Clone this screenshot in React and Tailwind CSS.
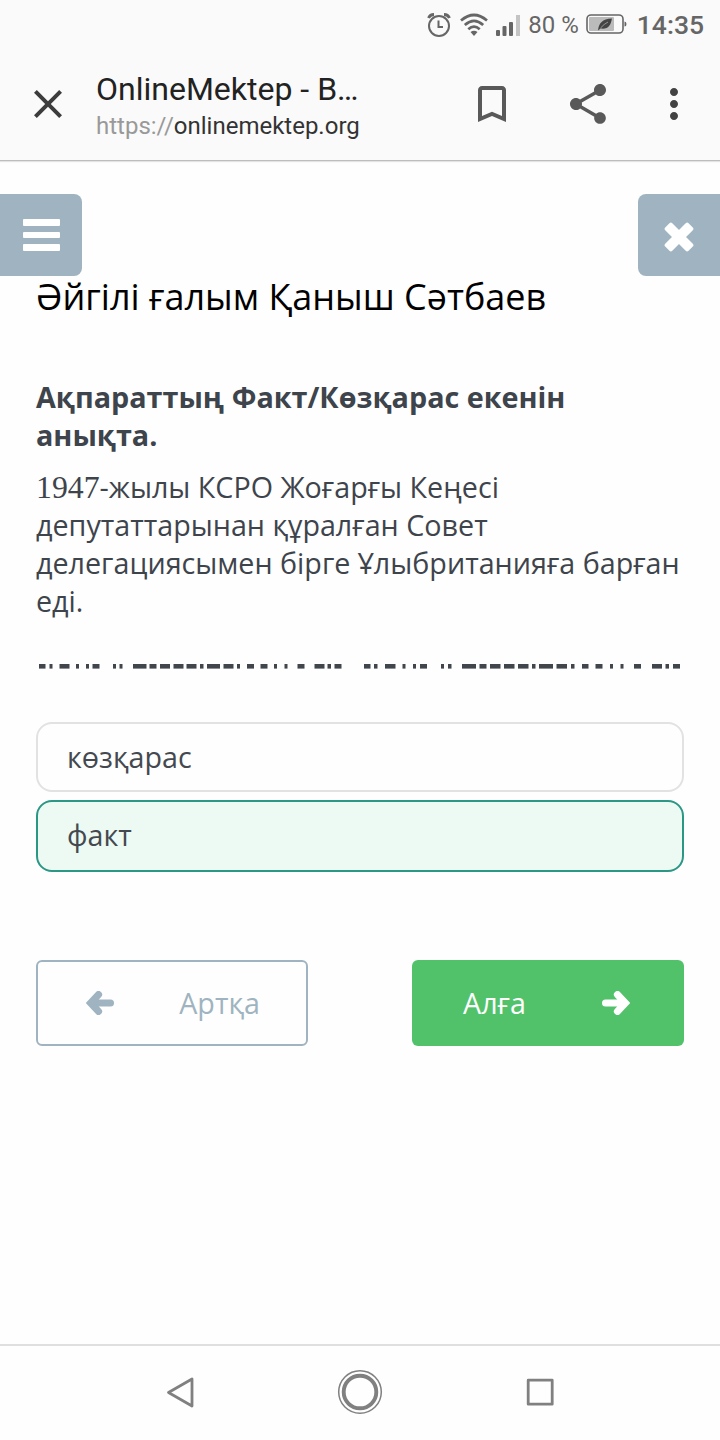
import { MdBookmarkBorder, MdClose, MdMoreVert, MdShare } from 'react-icons/md'

const SANS = "font-['Open_Sans','Noto_Sans',sans-serif]"

// [start, end] of every dash in the divider, in px from its left edge
const DASHES = [
  [3, 9.5], [13.5, 16.5], [23.5, 33.5], [40, 43], [50, 53], [56.5, 63.5],
  [77, 80], [83.5, 86.5], [97, 110.5], [113.5, 120.5], [124, 134], [137.5, 147.5],
  [150.5, 160.5], [164, 167.5], [171, 184], [187.5, 197.5], [201, 204], [211, 218],
  [224.5, 231.5], [238, 241], [248.5, 251.5], [261.5, 268.5], [278.5, 288.5],
  [291.5, 295], [298.5, 305.5],
  [328, 334.5], [338, 341.5], [349, 359.5], [366.5, 369.5], [377, 380], [384, 391],
  [405, 408], [412, 415.5], [426, 440], [443.5, 450.5], [454, 464.5], [468, 478.5],
  [482, 492.5], [496, 499.5], [503, 517], [520.5, 531], [535, 538.5], [546, 552.5],
  [559.5, 566.5], [574, 577], [584.5, 587.5], [598, 605], [616, 626], [629.5, 633],
  [637, 644],
]

function AlarmIcon() {
  return (
    <svg width="24" height="26" viewBox="0 0 24 26" fill="none" stroke="#666" strokeWidth="2">
      <circle cx="12" cy="14" r="10" />
      <path d="M11.5 8.5v6.5h4.5" />
      <path d="M1.5 6Q3 2.5 7 2.5M22.5 6Q21 2.5 17 2.5" strokeWidth="2.8" />
    </svg>
  )
}

function WifiIcon() {
  return (
    <svg width="28" height="24" viewBox="0 0 28 24" fill="none" stroke="#666" strokeWidth="2.7">
      <path d="M1 7.5Q14-3.5 27 7.5M4.8 12Q14 3.8 23.2 12M8.3 16.2Q14 11 19.7 16.2" />
      <path d="M10.5 19Q14 16.5 17.5 19L14 23z" fill="#666" stroke="none" />
    </svg>
  )
}

function SignalIcon() {
  return (
    <svg width="24" height="21" viewBox="0 0 24 21" fill="#666">
      <rect x="0" y="15" width="4" height="6" rx="1" />
      <rect x="6.5" y="11" width="4" height="10" rx="1" />
      <rect x="13" y="7" width="4" height="14" rx="1" />
      <rect x="20" y="0" width="4" height="21" fill="#c4c4c4" />
    </svg>
  )
}

function BatteryIcon() {
  return (
    <svg width="41" height="20" viewBox="0 0 41 20">
      <rect x="1" y="1" width="36" height="18" rx="4" fill="none" stroke="#666" strokeWidth="1.6" />
      <rect x="3" y="3" width="25" height="14" rx="1" fill="#bbb" />
      <path d="M38.5 7.5q2 0 2 2.5t-2 2.5z" fill="#666" />
      <path d="M12 16.5C13 9 16 5 26 4.5C24.5 12 22 15.5 14.5 14.5z" fill="#444" />
      <path d="M14.5 14Q18 10 22 8" stroke="#aaa" strokeWidth="0.8" fill="none" />
    </svg>
  )
}

function ArrowIcon({ className }) {
  return (
    <svg className={className} width="28" height="24" viewBox="0 0 28 24" fill="none" stroke="currentColor" strokeLinecap="round">
      <path d="M3.5 12h18" strokeWidth="7" />
      <path d="M15.5 3.6 23.3 12l-7.8 8.4" strokeWidth="7.2" fill="currentColor" />
    </svg>
  )
}

function StatusBar() {
  return (
    <div className="flex h-12 items-center justify-end pt-0.5 pr-4 font-[Roboto,sans-serif] text-[#666]">
      <AlarmIcon />
      <span className="ml-[9px]"><WifiIcon /></span>
      <span className="ml-2"><SignalIcon /></span>
      <span className="ml-2 text-[24px]">80 %</span>
      <span className="ml-[7px] -mt-0.5"><BatteryIcon /></span>
      <span className="ml-2.5 text-[26.5px] font-medium">14:35</span>
    </div>
  )
}

function BrowserBar() {
  return (
    <div className="flex h-[113px] items-center border-b border-[#bdbdbd] font-[Roboto,sans-serif] shadow-[0_1px_1px_#e4e4e4]">
      <MdClose size={48} className="ml-6 text-[#3c3c3c]" />
      <div className="ml-6 w-[300px] pt-[5px]">
        <div className="text-[32px] leading-[38px] text-[#222]">OnlineMektep - B…</div>
        <div className="text-[24px] leading-9 text-[#333]">
          <span className="text-[#999]">https://</span>onlinemektep.org
        </div>
      </div>
      <MdBookmarkBorder size={48} className="ml-auto text-[#595959]" />
      <MdShare size={48} className="ml-12 text-[#595959]" />
      <MdMoreVert size={48} className="ml-[38px] mr-[22px] text-[#424242]" />
    </div>
  )
}

function Question() {
  return (
    <section className="px-9 text-[#3e444c]">
      <h1 className="text-[36px] leading-[42px] whitespace-nowrap text-black">Әйгілі ғалым Қаныш Сәтбаев</h1>
      <h2 className="mt-[60px] text-[28.75px] leading-[38px] font-bold">
        Ақпараттың Факт/Көзқарас екенін<br />анықта.
      </h2>
      <p className="mt-3.5 text-[28.7px] leading-[38px] whitespace-nowrap">
        <span className="font-['Liberation_Serif',serif] text-[31.8px] leading-none">1947</span>-жылы КСРО Жоғарғы Кеңесі<br />
        депутаттарынан құралған Совет<br />
        делегациясымен бірге Ұлыбританияға барған<br />
        еді.
      </p>
      <svg className="mt-11" width="648" height="5" viewBox="0 0 648 5" fill="#40464c">
        {DASHES.map(([from, to]) => (
          <rect key={from} x={from} y="0" width={to - from} height="4.6" />
        ))}
      </svg>
    </section>
  )
}

export default function App() {
  return (
    <div className={`flex h-[1440px] w-[720px] flex-col bg-[#fefefe] ${SANS}`}>
      <header className="bg-[#fafafa]">
        <StatusBar />
        <BrowserBar />
      </header>

      <div className="mt-[33px] flex justify-between">
        <button className="flex h-[82px] w-[82px] items-center rounded-r-lg bg-[#9fb3c0] pl-[23px]">
          <span className="flex flex-col gap-1.5">
            <span className="h-[6.5px] w-[37px] rounded-[1px] bg-white" />
            <span className="h-[6.5px] w-[37px] rounded-[1px] bg-white" />
            <span className="h-[6.5px] w-[37px] rounded-[1px] bg-white" />
          </span>
        </button>
        <button className="flex h-[82px] w-[82px] items-center justify-center rounded-l-lg bg-[#9fb3c0] pt-[3px]">
          <svg width="30" height="30" viewBox="0 0 30 30" fill="#fff">
            <rect x="-1.5" y="10" width="33" height="10" rx="2" transform="rotate(45 15 15)" />
            <rect x="-1.5" y="10" width="33" height="10" rx="2" transform="rotate(-45 15 15)" />
          </svg>
        </button>
      </div>

      <Question />

      <div className="mx-9 mt-[53px] flex flex-col gap-2 text-[28.7px] text-[#44494f]">
        <div className="flex h-[70px] items-center rounded-2xl border-2 border-[#e2e2e2] pl-[29px]">көзқарас</div>
        <div className="flex h-[72px] items-center rounded-2xl border-2 border-[#2b9886] bg-[#edfaf3] pb-0.5 pl-[29px]">факт</div>
      </div>

      <div className="mx-9 mt-[88px] flex justify-between text-[28.7px]">
        <button className="flex h-[86px] w-[272px] items-center justify-between rounded-md border-2 border-[#9fb4c0] pr-[46px] pl-12 text-[#9fb4c0]">
          <ArrowIcon className="rotate-180" />
          <span>Артқа</span>
        </button>
        <button className="flex h-[86px] w-[272px] items-center justify-between rounded-md bg-[#51c26a] pr-[54px] pl-[51px] text-white">
          <span>Алға</span>
          <ArrowIcon />
        </button>
      </div>

      <nav className="mt-auto flex h-24 items-center justify-center border-t-2 border-[#dfdfdf]">
        <svg width="400" height="48" viewBox="0 0 400 48" fill="none" stroke="#808080" strokeLinejoin="round">
          <path d="M8.5 23.5 32 10v27z" strokeWidth="2.8" />
          <circle cx="200" cy="23" r="21.3" strokeWidth="1.5" />
          <circle cx="200" cy="23" r="16.3" strokeWidth="3.9" />
          <rect x="368.2" y="11.2" width="24" height="24" strokeWidth="2.8" />
        </svg>
      </nav>
    </div>
  )
}
